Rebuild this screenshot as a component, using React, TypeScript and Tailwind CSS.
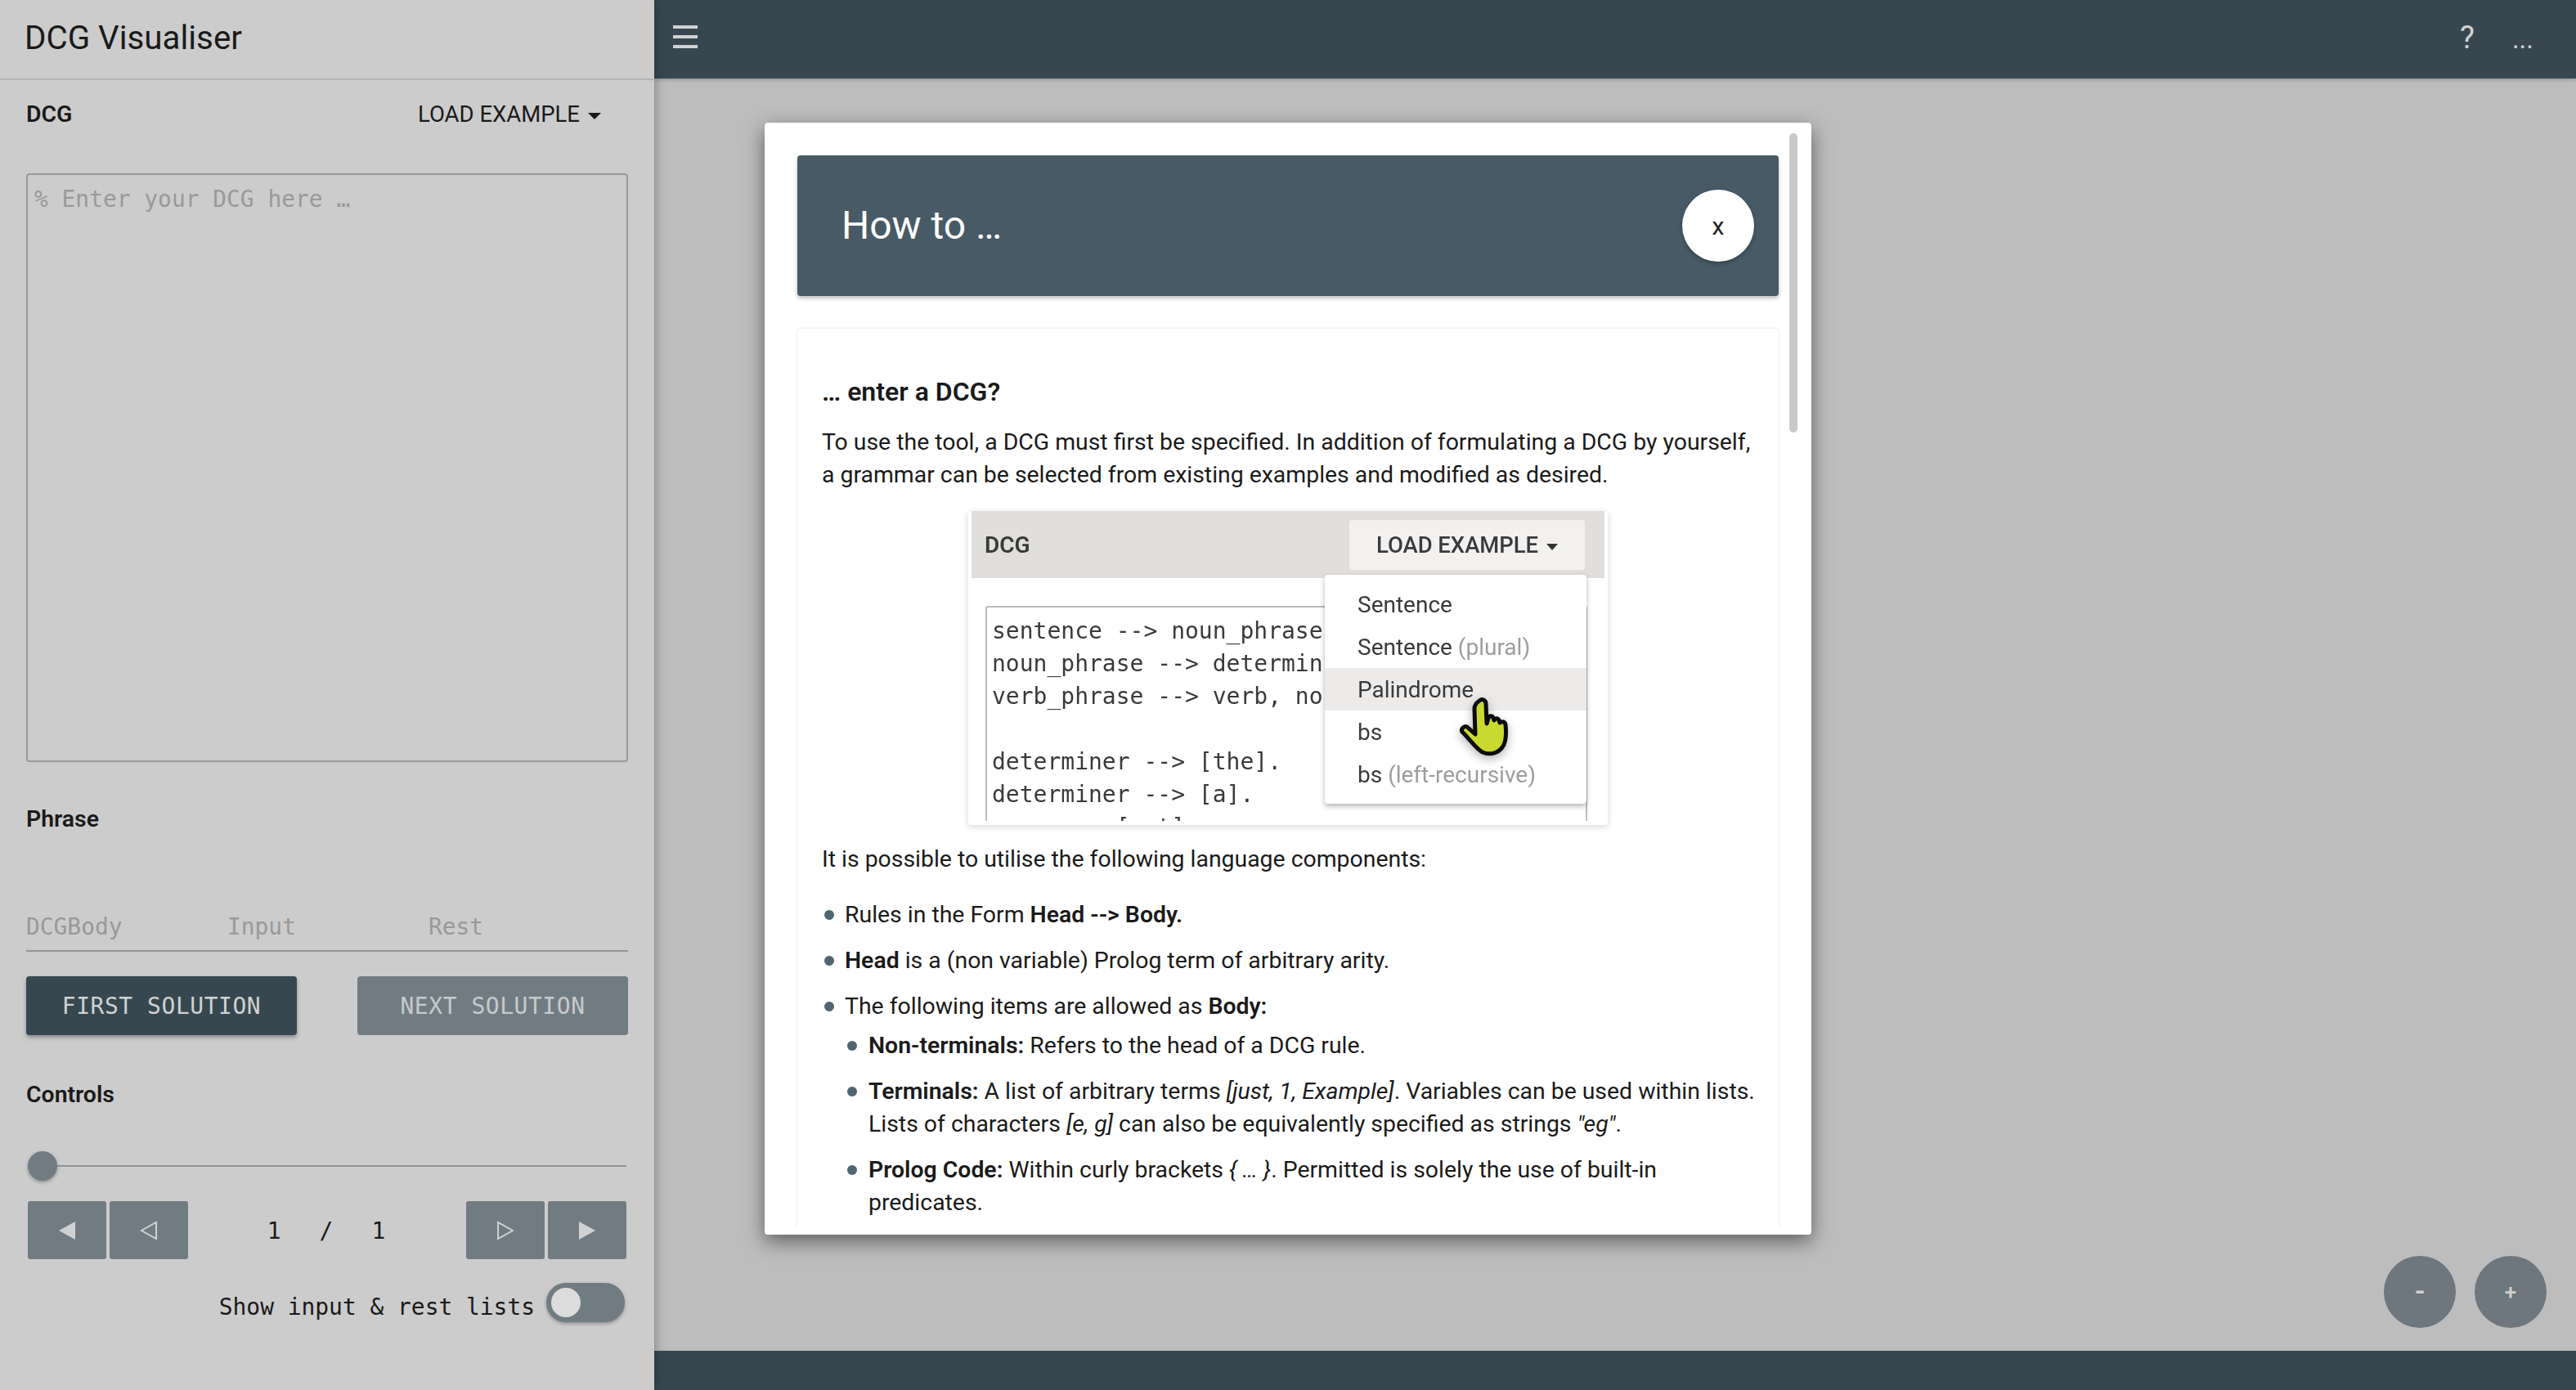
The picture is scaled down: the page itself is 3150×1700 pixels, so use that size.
import React from "react";

const mono = "[font-family:'DejaVu_Sans_Mono',monospace]";

function Bullet({ children, sub }: { children: React.ReactNode; sub?: boolean }) {
  return (
    <li className={`flex items-start ${sub ? "pl-[31px] gap-[14px]" : "pl-[3px] gap-[13px]"}`}>
      <span className="mt-[14px] h-[12px] w-[12px] shrink-0 rounded-full bg-[#4f6570]" />
      <div className="min-w-0 whitespace-nowrap">{children}</div>
    </li>
  );
}

function Hand() {
  return (
    <svg viewBox="0 0 66 76" className="h-[76px] w-[66px]">
      <path
        d="M25 6c3-3 8-1 8 4l1 24 2-7c1-3 5-3 6 0l1 3c1-3 5-3 6 0l1 3c2-2 6-2 7 2 1 10 1 22-4 28-5 7-15 10-24 6C22 66 14 54 4 44c-2-3 2-8 6-6l10 9-1-31c0-4 3-8 6-10z"
        fill="#c9d92f"
        stroke="#0c0c0c"
        strokeWidth="5"
        strokeLinejoin="round"
      />
    </svg>
  );
}

function ExampleImage() {
  const items: [string, string, boolean][] = [
    ["Sentence", "", false],
    ["Sentence ", "(plural)", false],
    ["Palindrome", "", true],
    ["bs", "", false],
    ["bs ", "(left-recursive)", false],
  ];
  return (
    <div className="relative mx-auto mt-[24px] h-[384px] w-[782px] overflow-hidden rounded-[4px] px-[4px] text-[#3a3a3a] shadow-[0_2px_8px_rgba(0,0,0,0.16)] blur-[0.6px]">
      <div className="flex h-[82px] items-center justify-between bg-[#e0dfdc] pl-[16px] pr-[24px]">
        <span className="pt-[2px] text-[28px] font-semibold">DCG</span>
        <div className="flex h-[61px] w-[288px] items-center justify-center gap-[10px] rounded-[4px] bg-[#f2f1ef] pt-[2px] text-[27.4px] font-medium">
          LOAD EXAMPLE
          <span className="mt-[3px] h-0 w-0 border-x-[7px] border-t-[8px] border-x-transparent border-t-[#333]" />
        </div>
      </div>
      <div className={`ml-[17px] mr-[21px] mt-[34px] h-[263px] overflow-hidden rounded-t-[3px] border-x-2 border-t-2 border-[#bbb] pl-[6px] pr-[8px] pt-[9px] text-[28px] leading-[40px] ${mono}`}>
        <div className="w-[404px] overflow-hidden whitespace-pre">{"sentence --> noun_phrase, verb_phrase.\nnoun_phrase --> determiner, noun.\nverb_phrase --> verb, noun_phrase.\n\ndeterminer --> [the].\ndeterminer --> [a].\nnoun --> [cat]."}</div>
      </div>
      <div className="absolute left-[436px] top-[78px] h-[280px] w-[320px] rounded-[4px] bg-white py-[10px] shadow-[0_3px_6px_rgba(0,0,0,0.3)]">
        {items.map(([a, b, hover]) => (
          <div key={a + b} className={`flex h-[52px] items-center pl-[40px] pt-[2px] text-[28px] ${hover ? "bg-[#ecebea]" : ""}`}>
            <span className="whitespace-pre">{a}</span>
            <span className="text-[#9d9d9d]">{b}</span>
          </div>
        ))}
      </div>
      <div className="absolute left-[600px] top-[226px] drop-shadow-[0_4px_6px_rgba(0,0,0,0.3)]">
        <Hand />
      </div>
    </div>
  );
}

export default function App() {
  return (
    <div className="flex h-[1700px] w-[3150px] overflow-hidden bg-[#bdbdbd] font-['Roboto',sans-serif] text-[28.4px] text-[#1a1a1a]">
      <aside className="relative z-10 flex w-[800px] shrink-0 flex-col bg-[#cccccc] shadow-[0_0_14px_rgba(0,0,0,0.35)]">
        <div className="flex h-[98px] items-center border-b-2 border-[#b5b5b5] pb-[2px] pl-[30px] text-[40.3px] leading-none">DCG Visualiser</div>
        <div className="flex flex-col px-[32px]">
          <div className="flex h-[83px] items-center justify-between pr-[33px]">
            <span className="pt-[1px] font-semibold">DCG</span>
            <span className="flex items-center gap-[10px] pt-[1px] text-[27.5px]">
              LOAD EXAMPLE
              <span className="mt-[3px] h-0 w-0 border-x-[8px] border-t-[8px] border-x-transparent border-t-[#1a1a1a]" />
            </span>
          </div>
          <div className={`mt-[31px] h-[720px] rounded-[4px] border-2 border-[#9a9a9a] px-[8px] pt-[10px] text-[27.9px] leading-[40px] text-[#999] ${mono}`}>% Enter your DCG here …</div>
          <div className="mt-[50px] h-[40px] font-semibold leading-[40px]">Phrase</div>
          <div className={`mt-[83px] flex h-[59px] items-start border-b-2 border-[#949494] pt-[9px] text-[27.9px] leading-[40px] text-[#999] ${mono}`}>
            <span className="w-[246px]">DCGBody</span>
            <span className="w-[246px]">Input</span>
            <span>Rest</span>
          </div>
          <div className={`mt-[30px] flex justify-between text-[27.9px] leading-none tracking-[0.6px] ${mono}`}>
            <div className="flex h-[72px] w-[331px] items-center justify-center rounded-[4px] bg-[#37474f] pt-[1px] text-[#cfd2d3] shadow-[0_3px_5px_rgba(0,0,0,0.3)]">FIRST SOLUTION</div>
            <div className="flex h-[72px] w-[331px] items-center justify-center rounded-[4px] bg-[#717c82] pt-[1px] text-[#c7cacb]">NEXT SOLUTION</div>
          </div>
          <div className="mt-[53px] h-[40px] font-semibold leading-[40px]">Controls</div>
          <div className="relative mx-[2px] mt-[49px] flex h-[36px] items-center">
            <div className="h-[2px] w-full bg-[#949494]" />
            <div className="absolute left-0 top-0 h-[36px] w-[36px] rounded-full bg-[#717c82] shadow-[0_2px_4px_rgba(0,0,0,0.3)]" />
          </div>
          <div className={`mx-[2px] mt-[25px] flex h-[71px] items-center text-[27.9px] ${mono}`}>
            <div className="flex gap-[4px] text-[#cfd2d3]">
              <div className="flex h-[71px] w-[96px] items-center justify-center rounded-[3px] bg-[#717c82]">
                <svg width="22" height="24" viewBox="0 0 22 24"><path d="M21 1v22L1 12z" fill="#cfd2d3" /></svg>
              </div>
              <div className="flex h-[71px] w-[96px] items-center justify-center rounded-[3px] bg-[#717c82]">
                <svg width="22" height="24" viewBox="0 0 22 24"><path d="M20 2v20L2 12z" fill="none" stroke="#cfd2d3" strokeWidth="2" /></svg>
              </div>
            </div>
            <div className="flex flex-1 items-center justify-center gap-[47px] pr-[2px] pt-[2px]">
              <span>1</span>
              <span>/</span>
              <span>1</span>
            </div>
            <div className="flex gap-[4px]">
              <div className="flex h-[71px] w-[96px] items-center justify-center rounded-[3px] bg-[#717c82]">
                <svg width="22" height="24" viewBox="0 0 22 24"><path d="M2 2v20l18-10z" fill="none" stroke="#cfd2d3" strokeWidth="2" /></svg>
              </div>
              <div className="flex h-[71px] w-[96px] items-center justify-center rounded-[3px] bg-[#717c82]">
                <svg width="22" height="24" viewBox="0 0 22 24"><path d="M1 1v22l20-11z" fill="#cfd2d3" /></svg>
              </div>
            </div>
          </div>
          <div className="mt-[29px] flex items-start justify-end gap-[14px] pr-[4px]">
            <span className={`mt-[10px] text-[27.9px] leading-[40px] ${mono}`}>Show input &amp; rest lists</span>
            <div className="flex h-[48px] w-[96px] items-center rounded-full bg-[#717c82] pl-[6px] shadow-[0_2px_4px_rgba(0,0,0,0.3)]">
              <span className="h-[36px] w-[36px] rounded-full bg-[#dcdcdc]" />
            </div>
          </div>
        </div>
      </aside>
      <main className="flex min-w-0 flex-1 flex-col">
        <header className="z-[1] flex h-[96px] shrink-0 items-center justify-between bg-[#38474f] pb-[6px] pl-[23px] pr-[52px] text-[#cfd2d3] shadow-[0_2px_4px_rgba(0,0,0,0.2)]">
          <div className="flex w-[30px] flex-col gap-[8px]">
            <span className="h-[4px] bg-[#cfd2d3]" />
            <span className="h-[4px] bg-[#cfd2d3]" />
            <span className="h-[4px] bg-[#cfd2d3]" />
          </div>
          <div className="mt-[2px] flex items-baseline gap-[46px] text-[38px] leading-none">
            <span>?</span>
            <span className="text-[33px]">...</span>
          </div>
        </header>
        <div className="relative min-h-0 flex-1">
          <div className="absolute left-[135px] top-[54px] h-[1360px] w-[1280px] overflow-hidden rounded-[4px] bg-white shadow-[0_8px_24px_rgba(0,0,0,0.5)]">
            <div className="h-[1350px] overflow-hidden pl-[40px] pr-[40px] pt-[40px]">
              <div className="flex h-[172px] items-center justify-between rounded-[4px] bg-[#475a65] pl-[54px] pr-[30px] shadow-[0_3px_5px_rgba(0,0,0,0.25)]">
                <span className="text-[48px] text-white">How to …</span>
                <span className="flex h-[88px] w-[88px] items-center justify-center rounded-full bg-white text-[30px] text-[#222] shadow-[0_2px_5px_rgba(0,0,0,0.3)]">x</span>
              </div>
              <div className="mt-[40px] rounded-[4px] px-[30px] pb-[40px] pt-[57px] leading-[40px] shadow-[0_0_3px_rgba(0,0,0,0.15)]">
                <h2 className="text-[32px] font-semibold">… enter a DCG?</h2>
                <p className="mt-[22px]">
                  To use the tool, a DCG must first be specified. In addition of formulating a DCG by yourself,
                  <br />a grammar can be selected from existing examples and modified as desired.
                </p>
                <ExampleImage />
                <p className="mt-[22px]">It is possible to utilise the following language components:</p>
                <ul className="mt-[28px] flex flex-col gap-[16px]">
                  <Bullet>Rules in the Form <b className="font-semibold">Head --&gt; Body.</b></Bullet>
                  <Bullet><b className="font-semibold">Head</b> is a (non variable) Prolog term of arbitrary arity.</Bullet>
                  <Bullet>The following items are allowed as <b className="font-semibold">Body:</b></Bullet>
                </ul>
                <ul className="mt-[8px] flex flex-col gap-[16px]">
                  <Bullet sub><b className="font-semibold">Non-terminals:</b> Refers to the head of a DCG rule.</Bullet>
                  <Bullet sub>
                    <b className="font-semibold">Terminals:</b> A list of arbitrary terms <i>[just, 1, Example]</i>. Variables can be used within lists.
                    <br />Lists of characters <i>[e, g]</i> can also be equivalently specified as strings <i>"eg"</i>.
                  </Bullet>
                  <Bullet sub>
                    <b className="font-semibold">Prolog Code:</b> Within curly brackets <i>{"{ … }"}</i>. Permitted is solely the use of built-in
                    <br />predicates.
                  </Bullet>
                </ul>
              </div>
            </div>
            <div className="absolute left-[1253px] top-[13px] h-[366px] w-[10px] rounded-full bg-[#c9c9c9]" />
          </div>
          <div className="absolute left-[2115px] top-[1440px] flex gap-[23px] font-medium text-[#cfcfcf]">
            <span className="flex h-[88px] w-[88px] items-center justify-center rounded-full bg-[#6d777d] text-[36px]">-</span>
            <span className="flex h-[88px] w-[88px] items-center justify-center rounded-full bg-[#6d777d] text-[26px]">+</span>
          </div>
        </div>
        <footer className="z-[1] h-[48px] shrink-0 bg-[#38474f]" />
      </main>
    </div>
  );
}
